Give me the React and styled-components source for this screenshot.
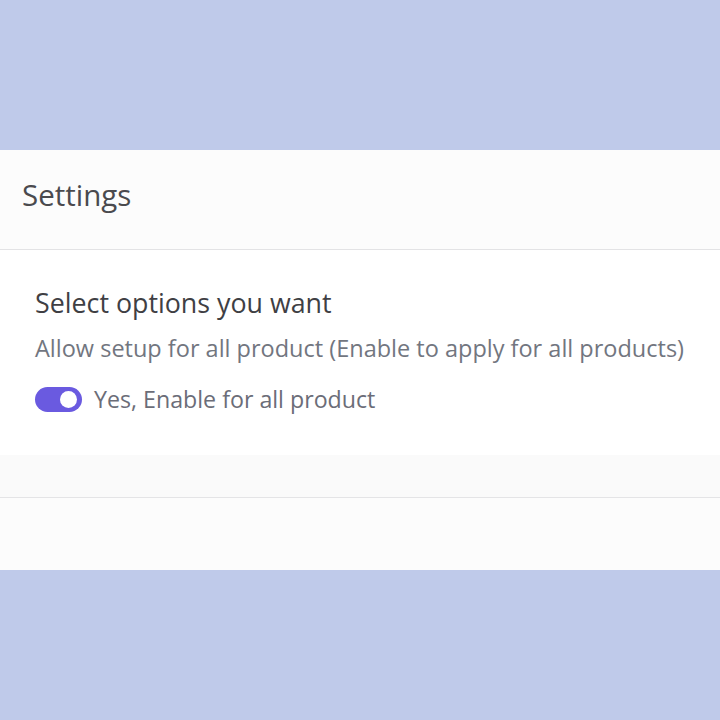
import React, { useState } from "react";
import styled, { createGlobalStyle } from "styled-components";

const Global = createGlobalStyle`
  html, body { margin: 0; padding: 0; }
  body { background: #bfcaea; font-family: "Open Sans", "Noto Sans", sans-serif; }
`;

const Page = styled.div`
  width: 720px;
  height: 720px;
  display: flex;
  flex-direction: column;
  justify-content: center;
`;

const Card = styled.section`
  height: 420px;
  background: #fdfdfd;
  display: flex;
  flex-direction: column;
`;

const Header = styled.header`
  height: 99px;
  box-sizing: content-box;
  border-bottom: 1px solid #e3e3e5;
  display: flex;
  align-items: center;
  padding: 0 0 0 22px;
  background: #fcfcfc;
`;

const Title = styled.h1`
  margin: 0 0 10px;
  font-weight: 400;
  font-size: 29.5px;
  line-height: 40px;
  color: #4a4a4e;
`;

const Body = styled.div`
  background: #ffffff;
  padding: 35px 35px 0;
  height: 170px;
`;

const Spacer = styled.div`
  height: 42px;
  background: #fafafa;
  border-bottom: 1px solid #e4e4e6;
`;

const Footer = styled.footer`
  flex: 1;
  background: #fcfcfc;
`;

const Heading = styled.h2`
  margin: 0;
  font-weight: 400;
  font-size: 26.8px;
  line-height: 36px;
  color: #3f3f44;
`;

const Desc = styled.p`
  margin: 12px 0 0;
  font-size: 23.5px;
  line-height: 30px;
  color: #72767f;
`;

const Row = styled.label`
  margin-top: 21px;
  display: flex;
  align-items: center;
  gap: 12px;
  cursor: pointer;
`;

const Track = styled.span`
  width: 47px;
  height: 25px;
  border-radius: 13px;
  background: ${(p) => (p.$on ? "#6a5ae0" : "#c9c9d0")};
  display: flex;
  align-items: center;
  justify-content: ${(p) => (p.$on ? "flex-end" : "flex-start")};
  padding: 0 5px;
  box-sizing: border-box;
`;

const Knob = styled.span`
  width: 17px;
  height: 17px;
  border-radius: 50%;
  background: #fff;
`;

const Label = styled.span`
  font-size: 23.2px;
  line-height: 30px;
  color: #6b6d78;
`;

export default function App() {
  const [on, setOn] = useState(true);
  return (
    <Page>
      <Global />
      <Card>
        <Header>
          <Title>Settings</Title>
        </Header>
        <Body>
          <Heading>Select options you want</Heading>
          <Desc>Allow setup for all product (Enable to apply for all products)</Desc>
          <Row onClick={() => setOn(!on)}>
            <Track $on={on}>
              <Knob />
            </Track>
            <Label>Yes, Enable for all product</Label>
          </Row>
        </Body>
        <Spacer />
        <Footer />
      </Card>
    </Page>
  );
}
